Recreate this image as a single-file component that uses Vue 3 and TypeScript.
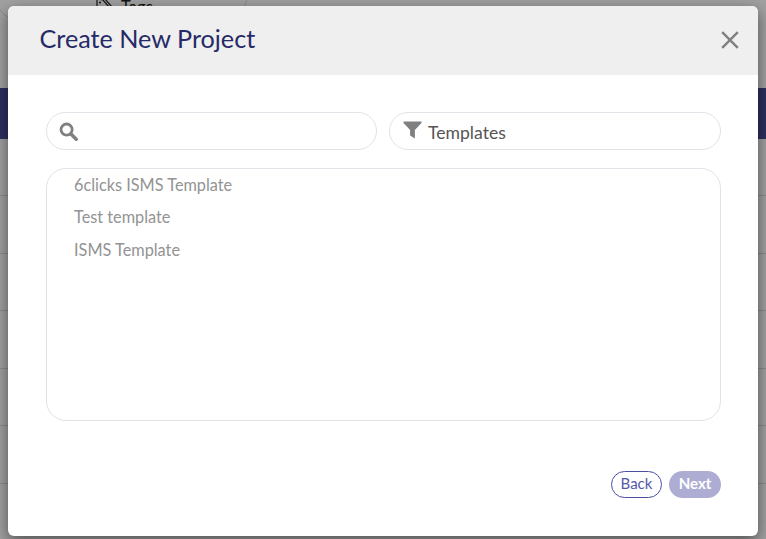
<script setup lang="ts">
const templates: string[] = ['6clicks ISMS Template', 'Test template', 'ISMS Template']
const rows: number[] = [1, 2, 3, 4, 5, 6]
</script>

<template>
  <div class="page">
    <div class="tags-tab">
      <svg class="tag-icon" width="18" height="18" viewBox="0 0 18 18" fill="none" stroke="#222" stroke-width="1.2">
        <path d="M1 1v8l7 7 6-6-7-8z" />
        <path d="M8 0l8 9" />
        <circle cx="4" cy="4.5" r="1" fill="#222" stroke="none" />
      </svg>
      <span>Tags</span>
    </div>
    <div class="band"></div>
    <div class="rows">
      <div v-for="r in rows" :key="r" class="row"></div>
    </div>

    <div class="backdrop"></div>

    <section class="modal">
      <header class="modal-head">
        <h1>Create New Project</h1>
        <svg class="close" width="18" height="18" viewBox="0 0 18 18" fill="none" stroke="#808080" stroke-width="2.4">
          <path d="M1.2 1.2l15.6 15.6M16.8 1.2l-15.6 15.6" />
        </svg>
      </header>
      <div class="modal-body">
        <div class="filters">
          <label class="pill">
            <svg width="19" height="19" viewBox="0 0 19 19" fill="none" stroke="#808080">
              <circle cx="7.6" cy="7.6" r="5.6" stroke-width="2.8" />
              <path d="M12 12l5.2 5.2" stroke-width="3.4" stroke-linecap="round" />
            </svg>
          </label>
          <label class="pill">
            <svg class="funnel" width="19" height="18" viewBox="0 0 19 18" fill="#808080">
              <path d="M0.5 0.5h18v1.6l-6.6 6.8v8.6l-4.8-3v-5.6l-6.6-6.8z" />
            </svg>
            <span class="pill-text">Templates</span>
          </label>
        </div>
        <ul class="list">
          <li v-for="t in templates" :key="t">{{ t }}</li>
        </ul>
        <div class="actions">
          <button class="btn back" type="button">Back</button>
          <button class="btn next" type="button">Next</button>
        </div>
      </div>
    </section>
  </div>
</template>

<style>
html, body { margin: 0; padding: 0; }
</style>

<style scoped>
.page {
  position: relative;
  width: 766px;
  height: 539px;
  overflow: hidden;
  background: #ffffff;
  font-family: Lato, "Open Sans", sans-serif;
}
.tags-tab {
  position: absolute;
  left: -4px;
  top: -30px;
  width: 251px;
  height: 50px;
  box-sizing: border-box;
  border: 1px solid #dcdcdc;
  border-radius: 22px;
  padding: 24px 0 0 99px;
  display: flex;
  align-items: center;
  gap: 7px;
  font-size: 16.5px;
  color: #222;
}
.band { position: absolute; left: 0; right: 0; top: 88px; height: 51px; background: #494c98; }
.rows { position: absolute; left: 0; right: 0; top: 138.4px; }
.row { height: 56.6px; border-bottom: 1px solid #dcdcdc; box-sizing: content-box; }
.backdrop { position: absolute; inset: 0; background: rgba(0, 0, 0, 0.37); }
.modal {
  position: absolute;
  left: 8px;
  top: 6px;
  width: 750px;
  height: 530px;
  background: #fff;
  border-radius: 6px;
  overflow: hidden;
  box-shadow: 0 5px 15px rgba(0, 0, 0, 0.5);
}
.modal-head {
  height: 69px;
  background: #efefef;
  display: flex;
  align-items: center;
  justify-content: space-between;
  padding: 0 19px 0 31.5px;
  box-sizing: border-box;
}
.modal-head h1 {
  margin: 0 0 5px;
  font-size: 25.2px;
  font-weight: 400;
  color: #262a68;
}
.close { margin-bottom: 1px; }
.modal-body { padding: 37px 37px 0 38px; }
.filters { display: grid; grid-template-columns: 331px 332px; gap: 12px; }
.pill {
  height: 38px;
  box-sizing: border-box;
  border: 1px solid #e2e2e8;
  border-radius: 19px;
  display: flex;
  align-items: center;
  padding-left: 12px;
}
.funnel { margin-left: 1px; margin-top: -3px; }
.pill-text { margin-left: 6px; margin-top: 2px; font-size: 17.6px; color: #555; }
.list {
  list-style: none;
  margin: 18px 0 0;
  padding: 0 0 0 27px;
  height: 253px;
  box-sizing: border-box;
  border: 1px solid #e2e2e8;
  border-radius: 20px;
}
.list li { height: 32.4px; line-height: 32px; font-size: 16.3px; color: #939393; }
.actions { display: flex; justify-content: flex-end; gap: 7px; margin-top: 50px; }
.btn {
  height: 27px;
  width: 51px;
  padding: 0 0 3px;
  border-radius: 14px;
  font-family: inherit;
  font-size: 15px;
  box-sizing: border-box;
}
.back { background: #fff; border: 1px solid #4a4f9f; color: #5558a8; }
.next { width: 52px; background: #adadd3; border: 0; color: #fff; font-weight: 700; }
</style>
